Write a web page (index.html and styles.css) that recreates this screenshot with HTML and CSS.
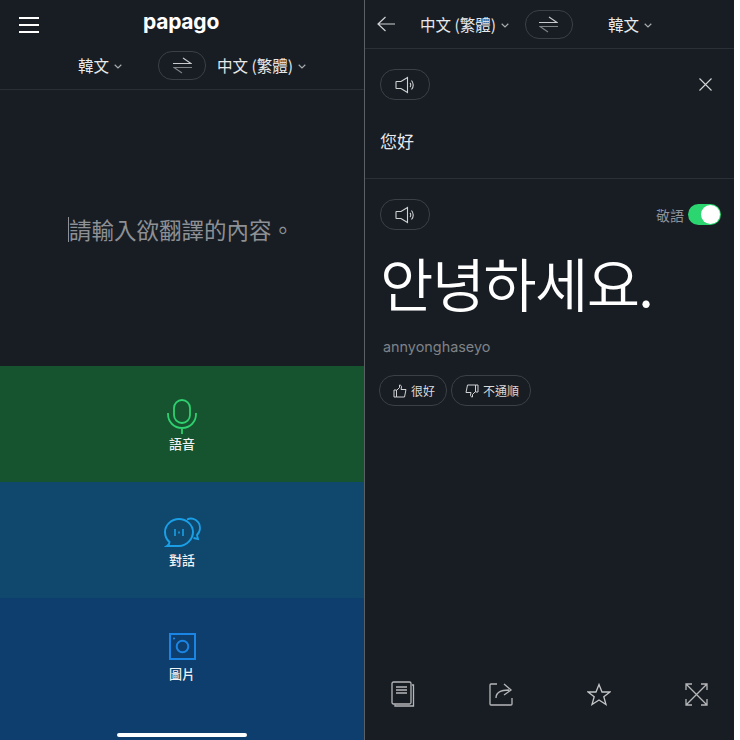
FILE: index.html
```html
<!DOCTYPE html>
<html>
<head>
	<meta charset="utf-8">
	<link rel="stylesheet" href="styles.css">
	<title>papago</title>
</head>
<body>
	<div class="shot">
		<div class="pane pane-home">
			<div class="logo-row">
				<svg class="menu-icon" width="20" height="16" viewBox="0 0 20 16"><path d="M0 1H20M0 8H20M0 15H20" stroke="#fff" stroke-width="2" fill="none"/></svg>
				<div class="logo">papago</div>
			</div>
			<div class="lang-row lang-row-home">
				<div class="lang">韓文<svg class="caret" width="8" height="5" viewBox="0 0 8 5"><path d="M.7.8 4 4 7.3.8" fill="none" stroke="#a8abae" stroke-width="1.2"/></svg></div>
				<div class="swap"><svg width="19" height="17" viewBox="0 0 19 17"><path d="M0 6.5H18L10 1" fill="none" stroke="#c8cacc" stroke-width="1.1"/><path d="M19 10.5H1L9 16" fill="none" stroke="#808386" stroke-width="1.1"/></svg></div>
				<div class="lang">中文 (繁體)<svg class="caret" width="8" height="5" viewBox="0 0 8 5"><path d="M.7.8 4 4 7.3.8" fill="none" stroke="#a8abae" stroke-width="1.2"/></svg></div>
			</div>
			<div class="input-area">
				<span class="cursor"></span>
				<span class="placeholder">請輸入欲翻譯的內容。</span>
			</div>
			<div class="mode mode-voice">
				<svg width="30" height="35" viewBox="0 0 30 35"><rect x="7" y="1" width="16" height="23" rx="8" fill="none" stroke="#2fd06f" stroke-width="1.8"/><path d="M1 14V15C1 23 7 29 15 29S29 23 29 15V14M15 29V35" fill="none" stroke="#2fd06f" stroke-width="1.8"/></svg>
				<span>語音</span>
			</div>
			<div class="mode mode-talk">
				<svg width="37" height="30" viewBox="0 0 37 30"><path d="M23 2.5C29 -.5 36 4 36 11C36 14 35 16 33 18L34 22L29.5 21" fill="none" stroke="#1a9fe6" stroke-width="1.8"/><path d="M15 2C22.5 2 29 8 29 15S22.5 29 15 29H3C4.5 28 5.5 26.5 5.500 25C2.500 22.500 1 19 1 15C1 8 7.500 2 15 2Z" fill="#10476c" stroke="#1a9fe6" stroke-width="2"/><path d="M11 12V19M15 14.5V16.5M19 12V19" stroke="#1a9fe6" stroke-width="1.6"/></svg>
				<span>對話</span>
			</div>
			<div class="mode mode-photo">
				<svg width="27" height="27" viewBox="0 0 27 27"><rect x="1" y="1" width="25" height="25" fill="none" stroke="#1b85e6" stroke-width="2"/><circle cx="13.5" cy="13.5" r="5.8" fill="none" stroke="#1b85e6" stroke-width="2"/><circle cx="5" cy="5.5" r="1.1" fill="#1b85e6"/></svg>
				<span>圖片</span>
				<div class="home-bar"></div>
			</div>
		</div>

		<div class="pane pane-result">
			<div class="lang-row lang-row-result">
				<svg class="back-icon" width="19" height="16" viewBox="0 0 19 16"><path d="M18 8H1M8.5 1 1 8 8.5 15" fill="none" stroke="#d0d2d3" stroke-width="1.2"/></svg>
				<div class="lang lang-from">中文 (繁體)<svg class="caret" width="8" height="5" viewBox="0 0 8 5"><path d="M.7.8 4 4 7.3.8" fill="none" stroke="#a8abae" stroke-width="1.2"/></svg></div>
				<div class="swap"><svg width="19" height="17" viewBox="0 0 19 17"><path d="M0 6.5H18L10 1" fill="none" stroke="#c8cacc" stroke-width="1.1"/><path d="M19 10.5H1L9 16" fill="none" stroke="#808386" stroke-width="1.1"/></svg></div>
				<div class="lang lang-to">韓文<svg class="caret" width="8" height="5" viewBox="0 0 8 5"><path d="M.7.8 4 4 7.3.8" fill="none" stroke="#a8abae" stroke-width="1.2"/></svg></div>
			</div>
			<div class="source">
				<div class="tool-row">
					<div class="speaker"><svg width="20" height="18" viewBox="0 0 20 18"><path d="M1.5 5.5H6L12.5 1.5V16.5L6 12.5H1.5C1 12.5 1 12 1 12V6C1 6 1 5.5 1.5 5.5Z" fill="none" stroke="#cfd1d2" stroke-width="1.1"/><path d="M15 7C16 8 16 10 15 11M16.5 4.5C18.8 7 18.8 11 16.5 13.5" fill="none" stroke="#cfd1d2" stroke-width="1.1"/></svg></div>
					<svg width="13" height="13" viewBox="0 0 13 13"><path d="M.5.5 12.5 12.5M12.5.5.5 12.5" stroke="#d4d5d6" stroke-width="1.1"/></svg>
				</div>
				<div class="source-text">您好</div>
			</div>
			<div class="target">
				<div class="tool-row">
					<div class="speaker"><svg width="20" height="18" viewBox="0 0 20 18"><path d="M1.5 5.5H6L12.5 1.5V16.5L6 12.5H1.5C1 12.5 1 12 1 12V6C1 6 1 5.5 1.5 5.5Z" fill="none" stroke="#cfd1d2" stroke-width="1.1"/><path d="M15 7C16 8 16 10 15 11M16.5 4.5C18.8 7 18.8 11 16.5 13.5" fill="none" stroke="#cfd1d2" stroke-width="1.1"/></svg></div>
					<div class="honorific">敬語<span class="toggle"><span class="knob"></span></span></div>
				</div>
				<div class="target-text">안녕하세요.</div>
				<div class="roman">annyonghaseyo</div>
				<div class="feedback">
					<div class="pill"><svg width="14" height="14" viewBox="0 0 14 14"><path d="M1 6H3.5V13H1ZM3.5 6.5 6.5 3.5V1C8 1 8.5 2 8.5 3L8 5.5H13L11.5 13H3.5" fill="none" stroke="#d0d2d3" stroke-width="1"/></svg>很好</div>
					<div class="pill"><svg width="14" height="14" viewBox="0 0 14 14"><path d="M13 8H10.5V1H13ZM10.5 7.5 7.5 10.5V13C6 13 5.5 12 5.5 11L6 8.5H1L2.5 1H10.5" fill="none" stroke="#d0d2d3" stroke-width="1"/></svg>不通順</div>
				</div>
			</div>
			<div class="bottom-tools">
				<svg width="24" height="26" viewBox="0 0 24 26"><rect x="1" y="1" width="19" height="22" rx="1.5" fill="none" stroke="#b5b7b9" stroke-width="1.3"/><path d="M21 4H22.5V25H4V23.5M5 6H16M5 9H16M5 12H16" fill="none" stroke="#b5b7b9" stroke-width="1.3"/></svg>
				<svg width="24" height="23" viewBox="0 0 24 23"><path d="M8 1H2C1.4 1 1 1.4 1 2V21C1 21.6 1.4 22 2 22H22C22.6 22 23 21.6 23 21V15" fill="none" stroke="#b5b7b9" stroke-width="1.3"/><path d="M7 15C7 10 10 7 20 7M15 1 22 7 15 12" fill="none" stroke="#b5b7b9" stroke-width="1.3"/></svg>
				<svg width="24" height="23" viewBox="0 0 24 23"><path d="M12 1.5 15 9H23L16.8 13.8 19 21.5 12 17 5 21.5 7.2 13.8 1 9H9Z" fill="none" stroke="#c4c6c8" stroke-width="1.3"/></svg>
				<svg width="23" height="23" viewBox="0 0 23 23"><path d="M1 7V1H7M16 1H22V7M22 16V22H16M7 22H1V16M1 1 22 22M22 1 1 22" fill="none" stroke="#b5b7b9" stroke-width="1.3"/></svg>
			</div>
		</div>
	</div>
</body>
</html>
```

FILE: styles.css
```css
html, body{
	margin: 0;
	height: 100%;
	background-color: #fff;
}
body{
	font-family: "Noto Sans CJK TC", "Liberation Sans", sans-serif;
	color: #e8e9ea;
}
.shot{
	display: flex;
	width: 734px;
	height: 740px;
	overflow: hidden;
	background-color: #181d24;
}
.pane{
	display: flex;
	flex-direction: column;
	height: 740px;
}
.pane-home{
	width: 364px;
	border-right: 1px solid #5c6064;
}
.pane-result{
	width: 369px;
}
.logo-row{
	position: relative;
	height: 46px;
	display: flex;
	justify-content: center;
	align-items: flex-start;
}
.menu-icon{
	position: absolute;
	left: 19px;
	top: 17px;
}
.logo{
	font-family: "Inter", "Liberation Sans", sans-serif;
	font-weight: 700;
	font-size: 21px;
	line-height: 24px;
	margin-top: 10px;
	margin-left: -2px;
	color: #fff;
	letter-spacing: -.2px;
}
.lang-row{
	display: flex;
	align-items: center;
	border-bottom: 1px solid #2b3036;
}
.lang-row-home{
	height: 38px;
	padding-left: 78px;
	padding-bottom: 5px;
}
.lang-row-result{
	height: 48px;
	padding-left: 12px;
}
.lang{
	display: flex;
	align-items: center;
	font-size: 15.5px;
	line-height: 22px;
	color: #e8e9ea;
	white-space: nowrap;
}
.caret{
	margin-left: 5px;
	margin-top: 2px;
}
.swap{
	width: 46px;
	height: 27px;
	border: 1px solid #3b4046;
	border-radius: 14px;
	display: flex;
	align-items: center;
	justify-content: center;
}
.lang-row-home .swap{
	margin-left: 36px;
	margin-right: 11px;
}
.lang-from{
	margin-left: 24px;
}
.lang-row-result .swap{
	margin-left: 16px;
}
.lang-to{
	margin-left: 35px;
}
.input-area{
	height: 276px;
	display: flex;
	align-items: center;
	padding-left: 68px;
	padding-top: 2px;
	box-sizing: border-box;
}
.cursor{
	width: 1px;
	height: 25px;
	background-color: #8d9094;
}
.placeholder{
	font-size: 22.5px;
	color: #8d9094;
	white-space: nowrap;
}
.mode{
	position: relative;
	height: 116px;
	display: flex;
	flex-direction: column;
	align-items: center;
	box-sizing: border-box;
	font-size: 13px;
	font-weight: 500;
	color: #f0f1f2;
}
.mode span{
	line-height: 16px;
}
.mode-voice{
	background-color: #16532f;
	padding-top: 33px;
	gap: 2px;
}
.mode-talk{
	background-color: #10476c;
	padding-top: 35px;
	gap: 5px;
}
.mode-photo{
	background-color: #0d3e6d;
	padding-top: 35px;
	gap: 6px;
	flex: 1;
}
.home-bar{
	position: absolute;
	left: 117px;
	bottom: 3px;
	width: 130px;
	height: 4px;
	border-radius: 2px;
	background-color: #fff;
}
.source{
	height: 130px;
	box-sizing: border-box;
	padding: 20px 22px 0 15px;
	border-bottom: 1px solid #2b3036;
}
.tool-row{
	display: flex;
	align-items: center;
	justify-content: space-between;
}
.speaker{
	width: 48px;
	height: 29px;
	border: 1px solid #3b4046;
	border-radius: 15px;
	display: flex;
	align-items: center;
	justify-content: center;
}
.source-text{
	font-size: 17px;
	line-height: 24px;
	margin-top: 29px;
	color: #e8e9ea;
}
.target{
	padding: 20px 13px 0 15px;
	flex: 1;
}
.honorific{
	display: flex;
	align-items: center;
	font-size: 14px;
	line-height: 18px;
	color: #8f9296;
	gap: 4px;
}
.toggle{
	display: flex;
	justify-content: flex-end;
	align-items: center;
	width: 33px;
	height: 21px;
	padding: 0 1px;
	box-sizing: border-box;
	border-radius: 11px;
	background-color: #2bd670;
}
.knob{
	width: 19px;
	height: 19px;
	border-radius: 50%;
	background-color: #fff;
}
.target-text{
	font-size: 58px;
	line-height: 80px;
	margin-top: 12px;
	font-family: "Noto Sans CJK KR", sans-serif;
	font-weight: 350;
	color: #fff;
	letter-spacing: -1.7px;
	white-space: nowrap;
}
.roman{
	font-family: "Inter", "Liberation Sans", sans-serif;
	font-size: 14.4px;
	line-height: 20px;
	margin-top: 15px;
	margin-left: 3px;
	color: #7f8286;
}
.feedback{
	display: flex;
	gap: 4px;
	margin-top: 18px;
	margin-left: -1px;
}
.pill{
	display: flex;
	align-items: center;
	gap: 4px;
	height: 29px;
	padding: 0 11px 0 13px;
	border: 1px solid #3b4046;
	border-radius: 15px;
	font-size: 12px;
	color: #d8d9da;
}
.bottom-tools{
	display: flex;
	justify-content: space-between;
	align-items: center;
	padding: 0 26px 33px 26px;
}
```
